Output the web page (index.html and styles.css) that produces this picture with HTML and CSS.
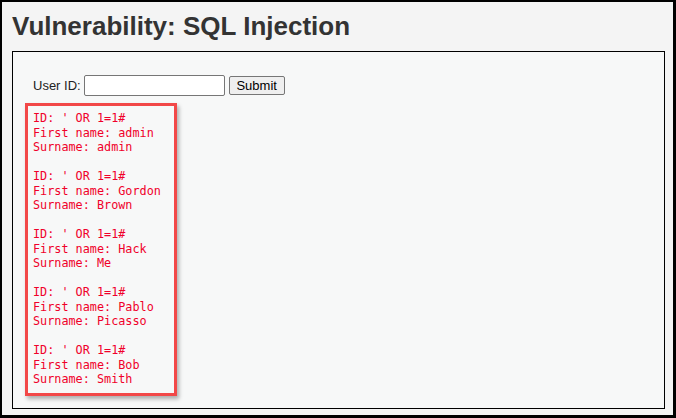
FILE: index.html
```html
<!DOCTYPE html>
<html>
<head>
<meta charset="utf-8">
<link rel="stylesheet" href="styles.css">
</head>
<body>
<div class="frame">
  <h1 class="title">Vulnerability: SQL Injection</h1>
  <div class="vulnerable">
    <form class="form">
      <label class="label">User ID:</label>
      <input class="field" type="text">
      <button class="submit" type="button">Submit</button>
    </form>
    <pre class="result">ID: ' OR 1=1#
First name: admin
Surname: admin

ID: ' OR 1=1#
First name: Gordon
Surname: Brown

ID: ' OR 1=1#
First name: Hack
Surname: Me

ID: ' OR 1=1#
First name: Pablo
Surname: Picasso

ID: ' OR 1=1#
First name: Bob
Surname: Smith</pre>
  </div>
</div>
</body>
</html>
```
FILE: styles.css
```css
html, body {
  margin: 0;
  padding: 0;
  width: 676px;
  height: 418px;
  overflow: hidden;
}
.frame {
  box-sizing: border-box;
  width: 676px;
  height: 418px;
  background: #f4f4f4;
  border-style: solid;
  border-color: #000;
  border-width: 2px 3px 3px 2px;
  padding: 0 0 0 10px;
  font-family: "Liberation Sans", Arial, sans-serif;
}
.title {
  margin: 0;
  padding-top: 9px;
  height: 40px;
  font-size: 26px;
  line-height: 30px;
  font-weight: bold;
  color: #333;
}
.vulnerable {
  box-sizing: border-box;
  width: 653px;
  height: 358px;
  border: 1px solid #000;
  background: #f7f8f8;
  padding: 23px 0 0 12px;
}
.form {
  display: flex;
  align-items: center;
  margin: 0 0 0 8px;
  height: 21px;
}
.label {
  font-size: 13px;
  color: #222;
  margin-right: 3px;
}
.field {
  box-sizing: border-box;
  width: 141px;
  height: 21px;
  border: 1px solid #767676;
  border-radius: 2px;
  background: #fff;
  margin: 0 4px 0 0;
  padding: 0;
}
.submit {
  box-sizing: border-box;
  width: 56px;
  height: 19px;
  border: 1px solid #767676;
  border-radius: 2px;
  background: #efefef;
  font-family: "Liberation Sans", Arial, sans-serif;
  font-size: 13px;
  color: #000;
  padding: 0;
}
.result {
  box-sizing: border-box;
  width: 152px;
  height: 293px;
  margin: 7px 0 0 0;
  border: 3px solid #f24848;
  box-shadow: 2px 3px 4px rgba(0,0,0,0.3);
  padding: 5px 0 0 5px;
  font-family: "DejaVu Sans Mono", monospace;
  font-size: 11.8px;
  line-height: 14.5px;
  color: #f0002a;
}
```
